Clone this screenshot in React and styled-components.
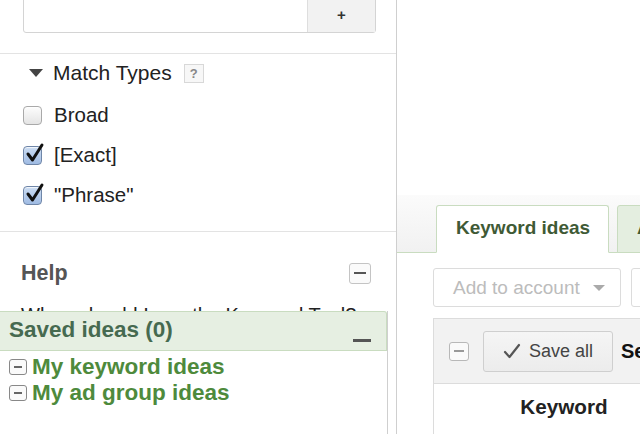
import React from "react";
import styled, { createGlobalStyle } from "styled-components";

const Global = createGlobalStyle`
  html, body { margin: 0; padding: 0; width: 640px; height: 434px; overflow: hidden; background: #fff; }
  body { font-family: "Liberation Sans", Arial, sans-serif; color: #222; }
  * { box-sizing: border-box; }
`;

const Page = styled.div`
  display: flex;
  width: 640px;
  height: 434px;
  overflow: hidden;
`;

const LeftPanel = styled.div`
  position: relative;
  width: 397px;
  flex: none;
  border-right: 1px solid #cfcfcf;
  overflow: hidden;
`;

const InputRow = styled.div`
  display: flex;
  margin: -5px 20px 0 23px;
  height: 38px;
  border: 1px solid #d4d4d4;
  border-radius: 3px;
  background: #fff;
`;

const TextField = styled.div`
  flex: 1;
`;

const PlusButton = styled.div`
  width: 68px;
  display: flex;
  align-items: center;
  justify-content: center;
  background: #f2f2f2;
  border-left: 1px solid #dedede;
  font-weight: bold;
  font-size: 15px;
  color: #333;
`;

const Section = styled.div`
  margin-top: ${(p) => p.$top}px;
  border-top: 1px solid #e3e3e3;
  padding-bottom: ${(p) => p.$bottom || 0}px;
`;

const MatchHeader = styled.div`
  display: flex;
  align-items: center;
  height: 24px;
  margin: 7px 0 0 29px;
  font-size: 21px;
  color: #222;
`;

const Triangle = styled.span`
  width: 0;
  height: 0;
  border-left: 7px solid transparent;
  border-right: 7px solid transparent;
  border-top: 8px solid #444;
  margin-right: 10px;
`;

const HelpBadge = styled.span`
  display: inline-flex;
  align-items: center;
  justify-content: center;
  width: 20px;
  height: 19px;
  margin-left: 12px;
  border: 1px solid #d8d8d8;
  background: #f7f7f7;
  color: #888;
  font-size: 13px;
  font-weight: bold;
`;

const CheckList = styled.div`
  display: flex;
  flex-direction: column;
  margin-top: 10px;
`;

const CheckRow = styled.label`
  display: flex;
  align-items: center;
  height: 40px;
  padding-left: 23px;
  font-size: 20.5px;
  color: #222;
`;

const Box = styled.span`
  position: relative;
  width: 19px;
  height: 19px;
  margin-right: 12px;
  border-radius: 4px;
  border: 1px solid ${(p) => (p.$checked ? "#6f86a8" : "#a9a9a9")};
  background: ${(p) =>
    p.$checked
      ? "linear-gradient(#cbdcf2, #9fbbe3)"
      : "linear-gradient(#fdfdfd, #e4e4e4)"};
  box-shadow: inset 0 1px 1px rgba(255,255,255,0.8);
`;

const CheckMark = styled.svg`
  position: absolute;
  left: 1px;
  top: -5px;
`;

const HelpHeader = styled.div`
  display: flex;
  align-items: center;
  justify-content: space-between;
  height: 24px;
  margin: 29px 25px 0 21px;
  font-size: 21.5px;
  font-weight: bold;
  color: #555;
`;

const MinusBox = styled.span`
  display: flex;
  align-items: center;
  justify-content: center;
  width: ${(p) => p.$w}px;
  height: ${(p) => p.$h}px;
  border: 1px solid ${(p) => p.$border || "#bdbdbd"};
  border-radius: 3px;
  background: #fafafa;
  flex: none;
  &::after {
    content: "";
    width: ${(p) => p.$w - 10}px;
    height: 2px;
    background: ${(p) => p.$bar || "#555"};
  }
`;

const HelpText = styled.div`
  margin: 18px 0 0 21px;
  font-size: 20px;
  line-height: 24px;
  color: #222;
  white-space: nowrap;
`;

const SavedPanel = styled.div`
  position: absolute;
  left: 0;
  top: 311px;
  bottom: 0;
  width: 388px;
  display: flex;
  flex-direction: column;
  background: #fff;
  border-right: 1px solid #cfcfcf;
`;

const SavedHeader = styled.div`
  position: relative;
  height: 40px;
  padding: 5px 0 0 9px;
  background: #e6efe2;
  border-top: 1px solid #c9dcc0;
  border-bottom: 1px solid #c9dcc0;
  border-right: 1px solid #c9dcc0;
  border-top-right-radius: 3px;
  font-size: 22.5px;
  font-weight: bold;
  color: #466a50;
  line-height: 26px;
`;

const Collapse = styled.span`
  position: absolute;
  right: 15px;
  bottom: 8px;
  width: 18px;
  height: 3px;
  background: #555;
`;

const SavedList = styled.div`
  display: flex;
  flex-direction: column;
  padding: 3px 0 0 9px;
`;

const SavedItem = styled.div`
  display: flex;
  align-items: center;
  gap: 5px;
  height: 26px;
  font-size: 22.5px;
  font-weight: bold;
  color: #4e8a3c;
`;

const RightPanel = styled.div`
  flex: 1;
  display: flex;
  flex-direction: column;
  overflow: hidden;
`;

const TabBar = styled.div`
  flex: none;
  display: flex;
  align-items: flex-end;
  gap: 8px;
  margin-top: 195px;
  height: 58px;
  padding-left: 39px;
  background: linear-gradient(#fbfbfb, #f1f1f1);
  border-bottom: 1px solid #c9dcc0;
`;

const Tab = styled.div`
  flex: none;
  width: ${(p) => p.$w}px;
  height: 48px;
  margin-bottom: -1px;
  display: flex;
  align-items: center;
  padding: 0 0 2px 19px;
  border: 1px solid #c9dcc0;
  border-bottom: ${(p) => (p.$active ? "1px solid #fff" : "1px solid #c9dcc0")};
  border-top-left-radius: 3px;
  border-top-right-radius: 3px;
  background: ${(p) => (p.$active ? "#fff" : "#e4eee0")};
  font-size: 19px;
  font-weight: bold;
  color: #3f5a36;
  white-space: nowrap;
`;

const Content = styled.div`
  flex: none;
  display: flex;
  flex-direction: column;
  padding-left: 36px;
`;

const Toolbar = styled.div`
  display: flex;
  gap: 10px;
  margin-top: 15px;
`;

const ToolButton = styled.div`
  flex: none;
  width: ${(p) => p.$w}px;
  height: 39px;
  display: flex;
  align-items: center;
  gap: 13px;
  padding-left: 19px;
  border: 1px solid #dcdcdc;
  border-radius: 3px;
  background: #fff;
  font-size: 19px;
  color: #bcbcbc;
  white-space: nowrap;
`;

const Caret = styled.span`
  width: 0;
  height: 0;
  border-left: 6px solid transparent;
  border-right: 6px solid transparent;
  border-top: 6px solid #aaa;
`;

const Table = styled.div`
  margin-top: 11px;
  width: 420px;
  border: 1px solid #dcdcdc;
  border-right: none;
`;

const TableHeader = styled.div`
  display: flex;
  align-items: center;
  height: 65px;
  padding-left: 15px;
  background: #f2f2f2;
  border-bottom: 1px solid #dcdcdc;
`;

const SaveAll = styled.div`
  display: flex;
  align-items: center;
  gap: 8px;
  width: 130px;
  height: 41px;
  margin-left: 14px;
  padding-left: 19px;
  border: 1px solid #cfcfcf;
  border-radius: 3px;
  background: linear-gradient(#f5f5f5, #ececec);
  font-size: 18px;
  color: #444;
`;

const HeaderLabel = styled.span`
  margin-left: 8px;
  font-size: 20px;
  font-weight: bold;
  color: #111;
  white-space: nowrap;
`;

const ColumnRow = styled.div`
  display: flex;
  height: 52px;
  background: #fff;
`;

const ColumnHead = styled.div`
  width: 260px;
  display: flex;
  align-items: center;
  justify-content: center;
  padding-bottom: 6px;
  font-size: 20.7px;
  font-weight: bold;
  color: #222;
`;

function Checkbox({ checked }) {
  return (
    <Box $checked={checked}>
      {checked && (
        <CheckMark width="20" height="22" viewBox="0 0 20 22">
          <path d="M3 12 L7.5 18 L17 3" fill="none" stroke="#111" strokeWidth="3" strokeLinecap="round" strokeLinejoin="round" />
        </CheckMark>
      )}
    </Box>
  );
}

export default function App() {
  return (
    <Page>
      <Global />
      <LeftPanel>
        <InputRow>
          <TextField />
          <PlusButton>+</PlusButton>
        </InputRow>
        <Section $top={20} $bottom={16}>
          <MatchHeader>
            <Triangle />
            Match Types
            <HelpBadge>?</HelpBadge>
          </MatchHeader>
          <CheckList>
            <CheckRow><Checkbox />Broad</CheckRow>
            <CheckRow><Checkbox checked />[Exact]</CheckRow>
            <CheckRow><Checkbox checked />"Phrase"</CheckRow>
          </CheckList>
        </Section>
        <Section $top={0}>
          <HelpHeader>
            Help
            <MinusBox $w={22} $h={21} $border="#c4c4c4" />
          </HelpHeader>
          <HelpText>When should I use the Keyword Tool?</HelpText>
        </Section>
        <SavedPanel>
          <SavedHeader>
            Saved ideas (0)
            <Collapse />
          </SavedHeader>
          <SavedList>
            <SavedItem><MinusBox $w={18} $h={16} $border="#888" $bar="#666" />My keyword ideas</SavedItem>
            <SavedItem><MinusBox $w={18} $h={16} $border="#888" $bar="#666" />My ad group ideas</SavedItem>
          </SavedList>
        </SavedPanel>
      </LeftPanel>
      <RightPanel>
        <TabBar>
          <Tab $active $w={173}>Keyword ideas</Tab>
          <Tab $w={120}>Ad group ideas</Tab>
        </TabBar>
        <Content>
          <Toolbar>
            <ToolButton $w={188}>Add to account<Caret /></ToolButton>
            <ToolButton $w={120} />
          </Toolbar>
          <Table>
            <TableHeader>
              <MinusBox $w={20} $h={19} $border="#b8b8b8" $bar="#999" />
              <SaveAll>
                <svg width="18" height="16" viewBox="0 0 18 16">
                  <path d="M2 9 L6.5 14 L16 2" fill="none" stroke="#555" strokeWidth="2.2" strokeLinecap="round" strokeLinejoin="round" />
                </svg>
                Save all
              </SaveAll>
              <HeaderLabel>Search terms</HeaderLabel>
            </TableHeader>
            <ColumnRow>
              <ColumnHead>Keyword</ColumnHead>
            </ColumnRow>
          </Table>
        </Content>
      </RightPanel>
    </Page>
  );
}
